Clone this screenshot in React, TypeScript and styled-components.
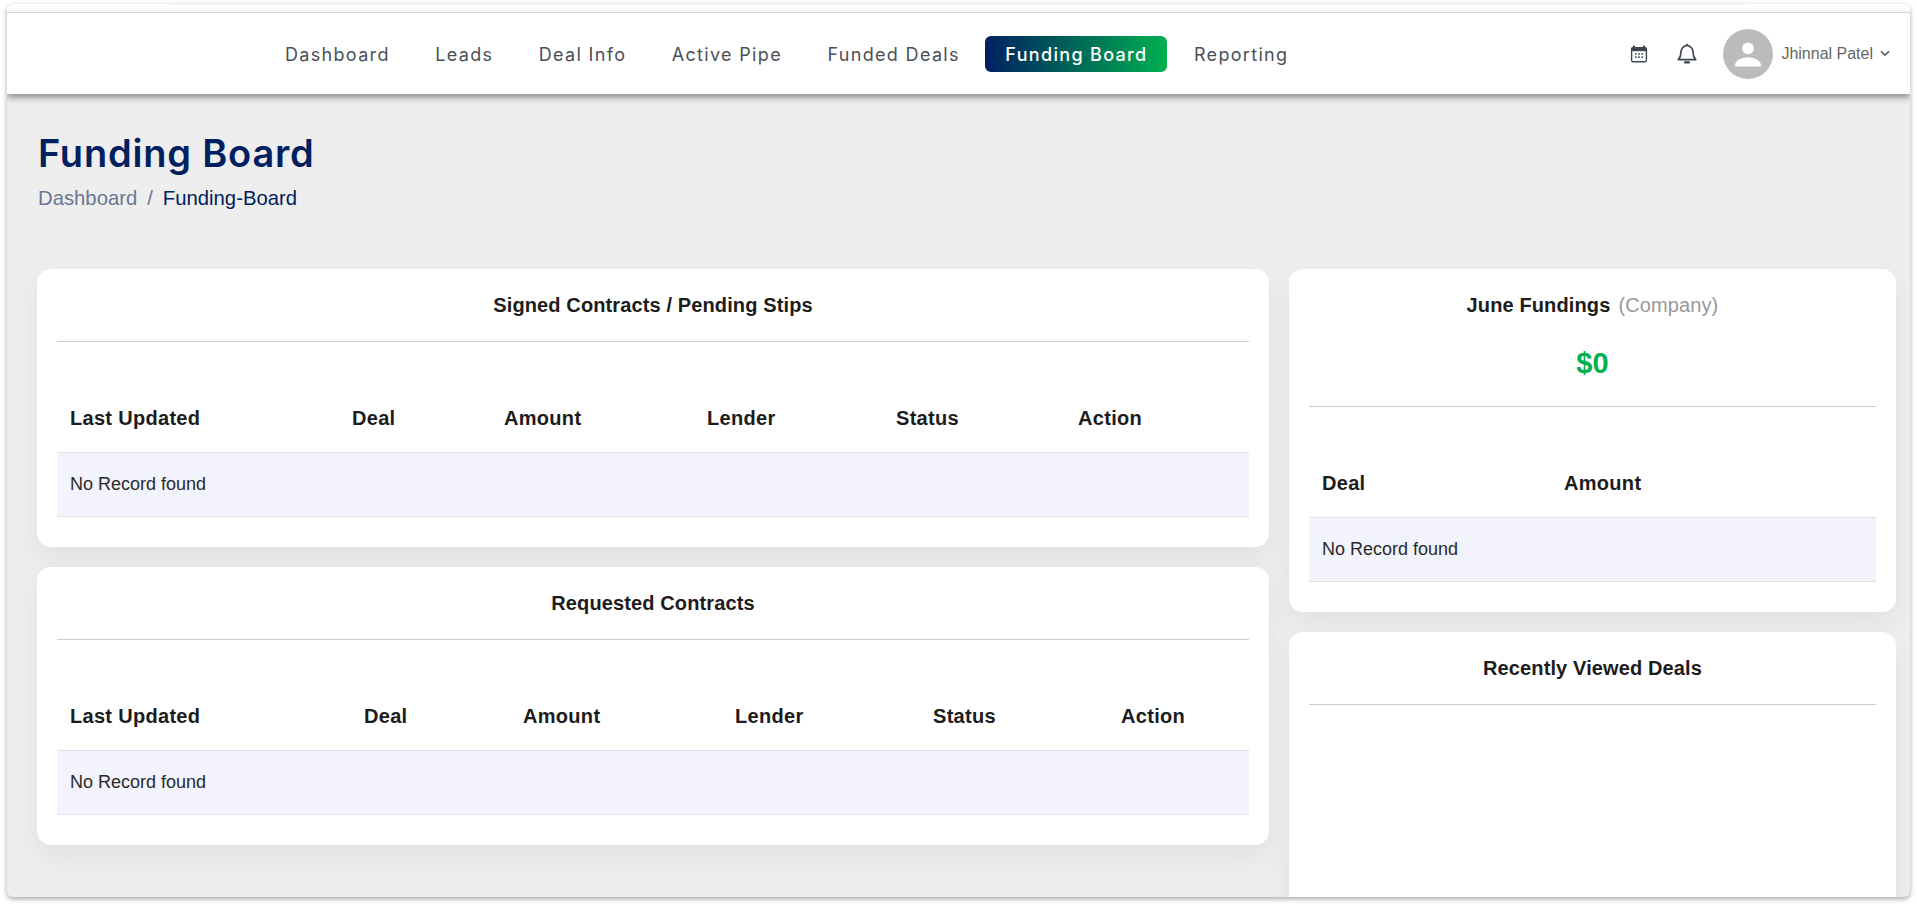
import React from 'react';
import styled, { createGlobalStyle } from 'styled-components';

const GlobalStyle = createGlobalStyle`
  html, body {
    margin: 0;
    height: 100%;
    background: #fff;
    overflow: hidden;
  }
  body {
    font-family: "Liberation Sans", Arial, sans-serif;
  }
`;

const Frame = styled.div`
  margin: 4px 7px 0 7px;
  height: 893px;
  background: #eee;
  border-radius: 6px;
  box-shadow: 0 2px 5px rgba(0, 0, 0, 0.35);
  display: flex;
  flex-direction: column;
  overflow: hidden;
`;

const TopStrip = styled.div`
  height: 8px;
  padding: 0 165px;
  background: #fff;
  border-bottom: 1px solid #e4e4e4;
  flex: none;
`;

const TopEdge = styled.div`
  border-top: 1px dotted #e2e2e2;
`;

const Navbar = styled.header`
  height: 81px;
  flex: none;
  background: #fff;
  box-shadow: 0 3px 7px rgba(0, 0, 0, 0.45);
  display: flex;
  align-items: center;
  padding: 0 20px 0 260px;
  position: relative;
`;

const NavList = styled.nav`
  display: flex;
  align-items: center;
  gap: 9.5px;
  flex: 1;
`;

const NavItem = styled.a<{ $active?: boolean }>`
  box-sizing: border-box;
  height: 36px;
  display: flex;
  align-items: center;
  padding: 2px ${(p) => (p.$active ? '20px' : '18px')} 0;
  margin: 0 ${(p) => (p.$active ? '-1px' : '0')} 0 ${(p) => (p.$active ? '-2px' : '0')};
  border-radius: 6px;
  font-family: Inter, "Liberation Sans", sans-serif;
  font-size: 18px;
  letter-spacing: 1.32px;
  color: ${(p) => (p.$active ? '#fff' : '#4a5058')};
  font-weight: ${(p) => (p.$active ? 500 : 400)};
  background: ${(p) => (p.$active ? 'linear-gradient(90deg, #002060 0%, #00b050 100%)' : 'transparent')};
`;

const UserArea = styled.div`
  display: flex;
  align-items: center;
`;

const CalendarSlot = styled.span`
  display: flex;
  margin-right: 29px;
`;

const BellSlot = styled.span`
  display: flex;
  margin-right: 26px;
`;

const Avatar = styled.span`
  width: 50px;
  height: 50px;
  border-radius: 50%;
  background: #bbb;
  display: flex;
  align-items: center;
  justify-content: center;
  margin-right: 8px;
`;

const UserName = styled.span`
  font-size: 16px;
  color: #666;
  margin-right: 7px;
`;

const Main = styled.main`
  flex: 1;
  min-height: 0;
  padding: 37px 14px 0 30px;
`;

const PageTitle = styled.h1`
  margin: 0 0 0 1px;
  font-family: Inter, "Liberation Sans", sans-serif;
  font-size: 38px;
  line-height: 44px;
  font-weight: 600;
  letter-spacing: 0.8px;
  color: #002060;
`;

const Breadcrumb = styled.div`
  display: flex;
  align-items: center;
  gap: 10px;
  margin: 10px 0 0 1px;
  font-size: 20.3px;
  line-height: 26px;
  color: #6b7794;
`;

const Current = styled.span`
  color: #002060;
`;

const Columns = styled.div`
  display: grid;
  grid-template-columns: 1232px 607px;
  gap: 20px;
  margin-top: 58px;
`;

const Stack = styled.div`
  display: flex;
  flex-direction: column;
  gap: 20px;
`;

const Card = styled.section<{ $tall?: boolean }>`
  background: #fff;
  border-radius: 14px;
  padding: 0 20px;
  box-shadow: 0 12px 28px rgba(0, 0, 0, 0.06);
  height: ${(p) => (p.$tall ? '300px' : 'auto')};
`;

const CardHead = styled.div`
  padding: 24px 0 24px;
  border-bottom: 1px solid #ccc;
  text-align: center;
`;

const CardTitle = styled.h2`
  margin: 0;
  font-size: 20px;
  line-height: 24px;
  font-weight: 700;
  letter-spacing: 0.12px;
  color: #1c1c1c;
`;

const Muted = styled.span`
  font-weight: 400;
  color: #999;
  margin-left: 8px;
`;

const Total = styled.div`
  margin: 29px 0 2px;
  font-size: 29px;
  line-height: 34px;
  font-weight: 700;
  color: #00b050;
`;

const Table = styled.div`
  margin-top: 45px;
  padding-bottom: 30px;
`;

const HeadRow = styled.div<{ $cols: string }>`
  display: grid;
  grid-template-columns: ${(p) => p.$cols};
  height: 62px;
  padding-bottom: 3px;
  align-items: center;
  border-bottom: 1px solid #dfe2ea;
`;

const HeadCell = styled.div`
  padding-left: 13px;
  font-size: 20px;
  font-weight: 700;
  letter-spacing: 0.3px;
  color: #1c1c1c;
`;

const EmptyRow = styled.div`
  height: 63px;
  display: flex;
  align-items: center;
  padding-left: 13px;
  background: #f2f3fd;
  border-bottom: 1px solid #dfe2ea;
  font-size: 18px;
  color: #2a2a2a;
`;

const CalendarIcon = () => (
  <svg width="18" height="18" viewBox="0 0 18 18">
    <rect x="3" y="0.5" width="2" height="3.5" rx="0.8" fill="#3f4650" />
    <rect x="13" y="0.5" width="2" height="3.5" rx="0.8" fill="#3f4650" />
    <rect x="1.6" y="2.6" width="14.8" height="14.2" rx="1.6" fill="#fff" stroke="#3f4650" strokeWidth="1.4" />
    <rect x="1.6" y="2.6" width="14.8" height="3.6" fill="#3f4650" />
    <g fill="#3f4650">
      <rect x="5" y="8.2" width="1.7" height="1.5" />
      <rect x="8.2" y="8.2" width="1.7" height="1.5" />
      <rect x="11.4" y="8.2" width="1.7" height="1.5" />
      <rect x="5" y="11.4" width="1.7" height="1.5" />
      <rect x="8.2" y="11.4" width="1.7" height="1.5" />
      <rect x="11.4" y="11.4" width="1.7" height="1.5" />
    </g>
  </svg>
);

const BellIcon = () => (
  <svg width="20" height="22" viewBox="0 0 20 22" fill="none" stroke="#3f4650" strokeWidth="1.6" strokeLinejoin="round">
    <path d="M1.2 16.6c1.5-1.3 2.6-2.6 2.6-6.6 0-3.9 2.6-7.6 6.2-7.6s6.2 3.7 6.2 7.6c0 4 1.1 5.3 2.6 6.6z" />
    <path d="M10 0.8v1.6" />
    <path d="M8 19.4h4" strokeWidth="2.2" strokeLinecap="round" />
  </svg>
);

const PersonIcon = () => (
  <svg width="28" height="28" viewBox="0 0 28 28" fill="#fff">
    <circle cx="14" cy="8.4" r="5.9" />
    <path d="M1 25.4c0-5.4 7.6-8.2 13-8.2s13 2.8 13 8.2c0 .6-.4 1-1 1H2c-.6 0-1-.4-1-1z" />
  </svg>
);

const Chevron = () => (
  <svg width="10" height="7" viewBox="0 0 10 7" fill="none" stroke="#555" strokeWidth="1.6">
    <path d="M1 1.2l4 4 4-4" />
  </svg>
);

const navLinks = ['Dashboard', 'Leads', 'Deal Info', 'Active Pipe', 'Funded Deals', 'Funding Board', 'Reporting'];
const dealColumns = ['Last Updated', 'Deal', 'Amount', 'Lender', 'Status', 'Action'];

type DataTableProps = { cols: string; headers: string[] };

const DataTable = ({ cols, headers }: DataTableProps) => (
  <Table>
    <HeadRow $cols={cols}>
      {headers.map((h) => (
        <HeadCell key={h}>{h}</HeadCell>
      ))}
    </HeadRow>
    <EmptyRow>No Record found</EmptyRow>
  </Table>
);

const App = () => {
  return (
    <>
      <GlobalStyle />
      <Frame>
        <TopStrip>
          <TopEdge />
        </TopStrip>
        <Navbar>
          <NavList>
            {navLinks.map((link) => (
              <NavItem key={link} $active={link === 'Funding Board'}>
                {link}
              </NavItem>
            ))}
          </NavList>
          <UserArea>
            <CalendarSlot>
              <CalendarIcon />
            </CalendarSlot>
            <BellSlot>
              <BellIcon />
            </BellSlot>
            <Avatar>
              <PersonIcon />
            </Avatar>
            <UserName>Jhinnal Patel</UserName>
            <Chevron />
          </UserArea>
        </Navbar>
        <Main>
          <PageTitle>Funding Board</PageTitle>
          <Breadcrumb>
            <span>Dashboard</span>
            <span>/</span>
            <Current>Funding-Board</Current>
          </Breadcrumb>
          <Columns>
            <Stack>
              <Card>
                <CardHead>
                  <CardTitle>Signed Contracts / Pending Stips</CardTitle>
                </CardHead>
                <DataTable cols="282px 152px 203px 189px 182px 1fr" headers={dealColumns} />
              </Card>
              <Card>
                <CardHead>
                  <CardTitle>Requested Contracts</CardTitle>
                </CardHead>
                <DataTable cols="294px 159px 212px 198px 188px 1fr" headers={dealColumns} />
              </Card>
            </Stack>
            <Stack>
              <Card>
                <CardHead>
                  <CardTitle>
                    June Fundings<Muted>(Company)</Muted>
                  </CardTitle>
                  <Total>$0</Total>
                </CardHead>
                <DataTable cols="242px 1fr" headers={['Deal', 'Amount']} />
              </Card>
              <Card $tall>
                <CardHead>
                  <CardTitle>Recently Viewed Deals</CardTitle>
                </CardHead>
              </Card>
            </Stack>
          </Columns>
        </Main>
      </Frame>
    </>
  );
};

export default App;
